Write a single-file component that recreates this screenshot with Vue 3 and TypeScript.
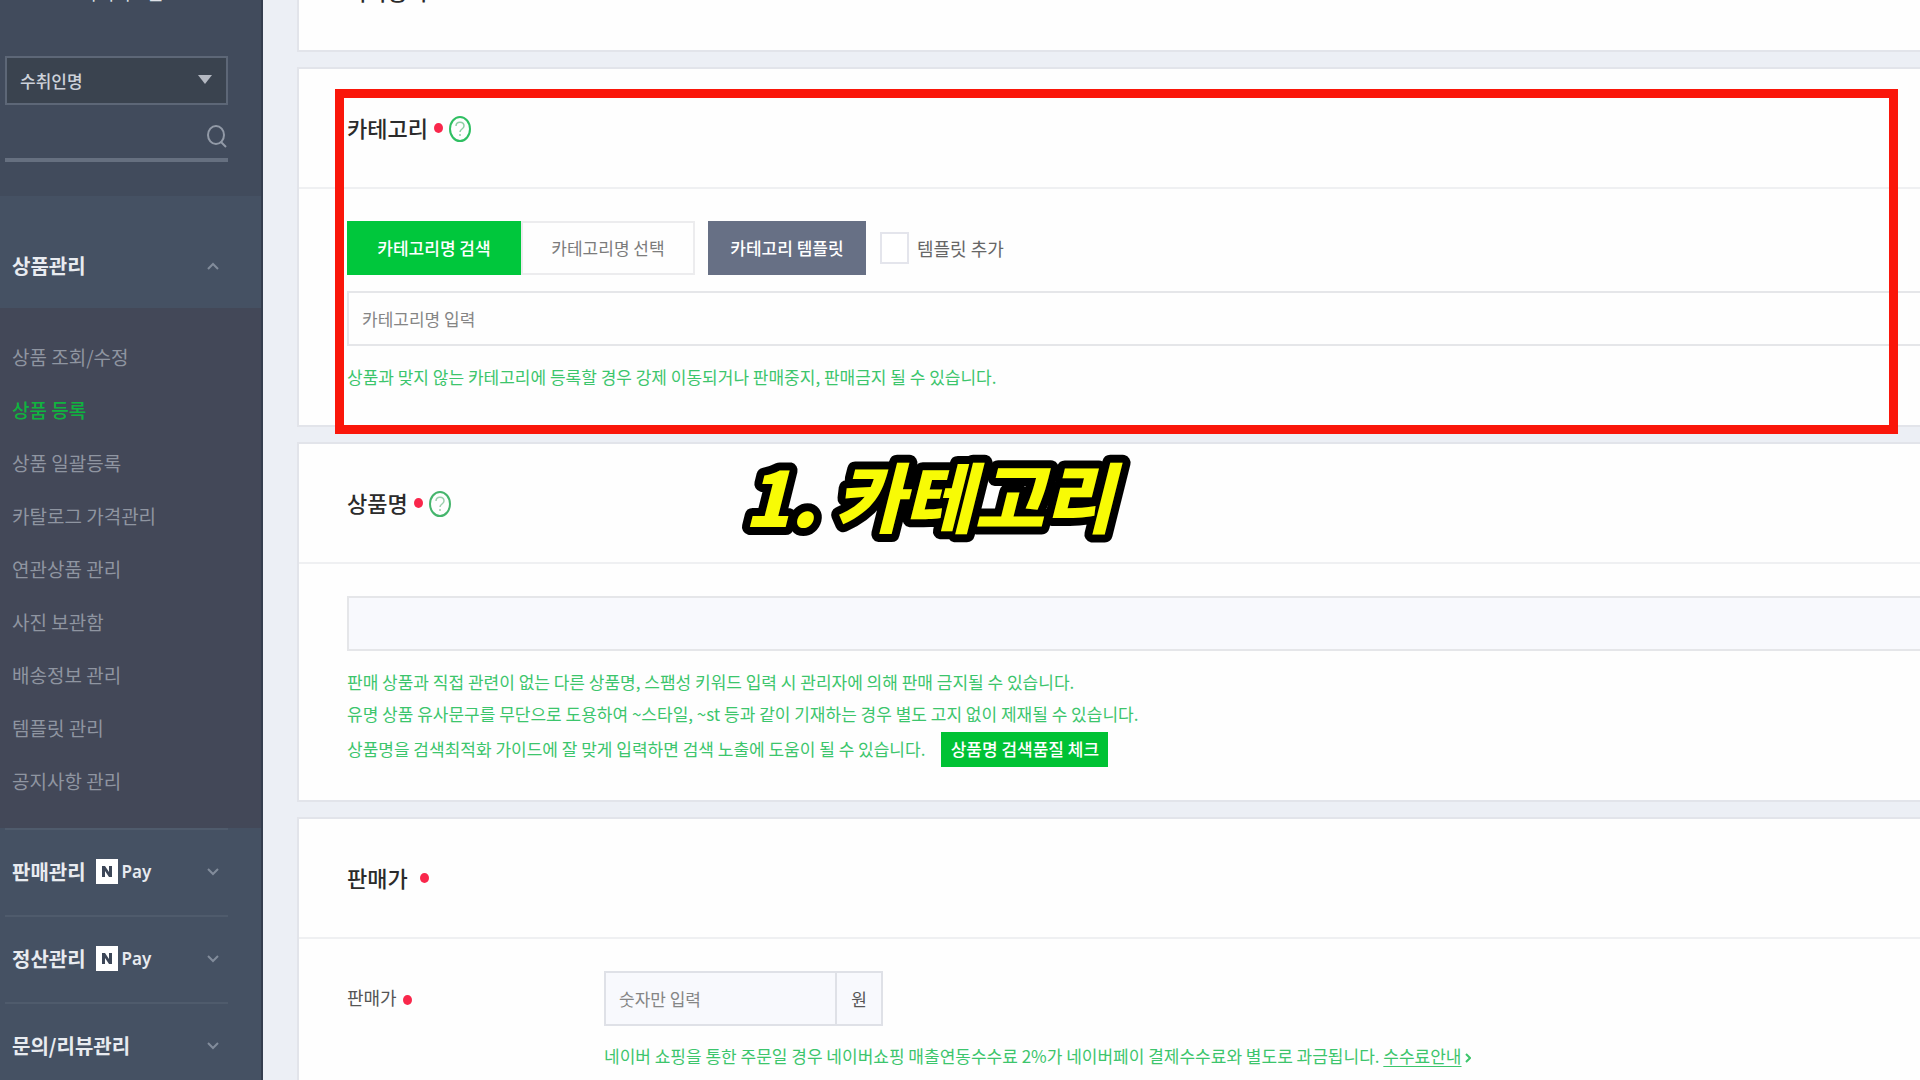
<script setup lang="ts">
import { ref } from 'vue'

interface MenuItem {
  label: string
  active?: boolean
}

interface MenuGroup {
  label: string
  pay: boolean
}

const productMenu: MenuItem[] = [
  { label: '상품 조회/수정' },
  { label: '상품 등록', active: true },
  { label: '상품 일괄등록' },
  { label: '카탈로그 가격관리' },
  { label: '연관상품 관리' },
  { label: '사진 보관함' },
  { label: '배송정보 관리' },
  { label: '템플릿 관리' },
  { label: '공지사항 관리' },
]

const groups: MenuGroup[] = [
  { label: '판매관리', pay: true },
  { label: '정산관리', pay: true },
  { label: '문의/리뷰관리', pay: false },
]

const searchType = ref('수취인명')
const keyword = ref('')
const categoryName = ref('')
const addTemplate = ref(false)
const productName = ref('')
const price = ref('')
</script>

<template>
  <div class="page">
    <aside class="sidebar">
      <div class="side-top">
        <div class="store">아이디스몰</div>
        <div class="select-wrap">
          <select v-model="searchType" class="select" aria-label="검색 조건">
            <option>수취인명</option>
          </select>
          <svg class="caret" width="14" height="9" viewBox="0 0 14 9"><path d="M0 0h14L7 9z" fill="#b4b9c2" /></svg>
        </div>
        <div class="search">
          <input v-model="keyword" class="search-input" type="text" aria-label="검색어" />
          <button class="search-btn" type="button" aria-label="검색">
            <svg width="22" height="24" viewBox="0 0 22 24" fill="none" stroke="#929aa7" stroke-width="2">
              <ellipse cx="10" cy="11" rx="8" ry="9" />
              <path d="M15 18l5 5" />
            </svg>
          </button>
        </div>
      </div>

      <nav>
        <button class="group open" type="button">
          <span>상품관리</span>
          <svg class="chev" width="12" height="8" viewBox="0 0 12 8"><path d="M1 7l5-5 5 5" /></svg>
        </button>
        <ul class="menu">
          <li v-for="item in productMenu" :key="item.label">
            <a href="#" :class="{ active: item.active }">{{ item.label }}</a>
          </li>
        </ul>
        <div class="groups">
          <button v-for="g in groups" :key="g.label" class="group" type="button">
            <span>{{ g.label }}</span>
            <span v-if="g.pay" class="pay">
              <svg width="22" height="25" viewBox="0 0 22 25">
                <rect width="22" height="25" fill="#fff" />
                <path d="M6 18V7h3l4 6V7h3v11h-3l-4-6v6z" fill="#3c4657" />
              </svg>
              <span>Pay</span>
            </span>
            <svg class="chev" width="12" height="8" viewBox="0 0 12 8"><path d="M1 1l5 5 5-5" /></svg>
          </button>
        </div>
      </nav>
    </aside>

    <main class="main">
      <section class="card">
        <header class="head"><h2>복사등록</h2></header>
      </section>

      <section class="card">
        <header class="head divided">
          <h2>카테고리</h2>
          <i class="dot"></i>
          <button class="help" type="button" aria-label="카테고리 도움말">
            <svg width="22" height="26" viewBox="0 0 22 26" fill="none">
              <ellipse cx="11" cy="13" rx="10" ry="12" stroke="#2fbf62" stroke-width="2" />
              <path d="M7 10c0-5 8-5 8 0 0 3-4 3-4 6M11 18v2" stroke="#8fcfa5" stroke-width="1.5" />
            </svg>
          </button>
        </header>
        <div class="body">
          <div class="row">
            <button class="btn green" type="button">카테고리명 검색</button>
            <button class="btn white" type="button">카테고리명 선택</button>
            <button class="btn slate" type="button">카테고리 템플릿</button>
            <label class="check"><input v-model="addTemplate" type="checkbox" />템플릿 추가</label>
          </div>
          <input v-model="categoryName" class="field plain" type="text" placeholder="카테고리명 입력" aria-label="카테고리명" />
          <p class="notes">상품과 맞지 않는 카테고리에 등록할 경우 강제 이동되거나 판매중지, 판매금지 될 수 있습니다.</p>
        </div>
        <div class="highlight"></div>
      </section>

      <section class="card">
        <header class="head divided">
          <h2>상품명</h2>
          <i class="dot"></i>
          <button class="help" type="button" aria-label="상품명 도움말">
            <svg width="22" height="26" viewBox="0 0 22 26" fill="none">
              <ellipse cx="11" cy="13" rx="10" ry="12" stroke="#45b56c" stroke-width="2" />
              <path d="M7 10c0-5 8-5 8 0 0 3-4 3-4 6M11 18v2" stroke="#9dcfae" stroke-width="1.5" />
            </svg>
          </button>
        </header>
        <div class="body">
          <input v-model="productName" class="field tinted" type="text" aria-label="상품명" />
          <div class="notes">
            <p>판매 상품과 직접 관련이 없는 다른 상품명, 스팸성 키워드 입력 시 관리자에 의해 판매 금지될 수 있습니다.</p>
            <p>유명 상품 유사문구를 무단으로 도용하여 ~스타일, ~st 등과 같이 기재하는 경우 별도 고지 없이 제재될 수 있습니다.</p>
            <p class="with-btn">
              상품명을 검색최적화 가이드에 잘 맞게 입력하면 검색 노출에 도움이 될 수 있습니다.
              <button class="mini" type="button">상품명 검색품질 체크</button>
            </p>
          </div>
        </div>
        <svg class="caption" width="400" height="110" viewBox="0 0 400 110">
          <text x="4" y="83">1. 카테고리</text>
        </svg>
      </section>

      <section class="card last">
        <header class="head divided">
          <h2>판매가</h2>
          <i class="dot wide"></i>
        </header>
        <div class="body form-row">
          <label class="form-label" for="price">판매가<i class="dot"></i></label>
          <div class="form-value">
            <div class="price">
              <input id="price" v-model="price" type="text" placeholder="숫자만 입력" />
              <span>원</span>
            </div>
            <div class="notes">
              <p>
                네이버 쇼핑을 통한 주문일 경우 네이버쇼핑 매출연동수수료 2%가 네이버페이 결제수수료와 별도로 과금됩니다.
                <a href="#">수수료안내</a>
                <svg class="more" width="6" height="10" viewBox="0 0 6 10" fill="none"><path d="M1 1l4 4-4 4" stroke="#3cc56c" stroke-width="2" /></svg>
              </p>
              <p>판매가, 할인가를 활용한 비정상 거래는 자동 탐지되어 판매지수에 포함되지 않으니 유의해주세요.</p>
            </div>
          </div>
        </div>
      </section>
    </main>
  </div>
</template>

<style>
body {
  margin: 0;
  overflow: hidden;
}
</style>

<style scoped>
.page {
  display: flex;
  height: 100vh;
  overflow: hidden;
  background: #eceff5;
  color: #333;
  font-family: "Noto Sans CJK KR", "Noto Sans", sans-serif;
  font-size: 17px;
  line-height: 32px;
}
* {
  box-sizing: border-box;
}
button,
input,
select {
  margin: 0;
  padding: 0;
  border: 0;
  border-radius: 0;
  background: none;
  font: inherit;
  color: inherit;
  outline: none;
}
h2,
p,
ul {
  margin: 0;
  padding: 0;
}
ul {
  list-style: none;
}

.sidebar {
  flex: none;
  width: 263px;
  background: #455163;
  border-right: 2px solid #343d4e;
}
.side-top {
  height: 220px;
  margin-top: -24px;
  padding: 0 33px 0 5px;
  background: #414b5c;
}
.store {
  height: 80px;
  padding-left: 12px;
  font-size: 18px;
  text-align: center;
  color: #dfe2e8;
}
.select-wrap {
  position: relative;
  height: 49px;
}
.select {
  width: 100%;
  height: 49px;
  padding-left: 13px;
  border: 2px solid #5d6777;
  background: #3a434f;
  color: #cdd2da;
  font-weight: 500;
  appearance: none;
}
.caret {
  position: absolute;
  right: 16px;
  top: 19px;
}
.search {
  display: flex;
  align-items: center;
  height: 57px;
  border-bottom: 4px solid #667080;
}
.search-input {
  flex: 1;
  min-width: 0;
  height: 40px;
}
.search-btn {
  display: flex;
  padding-top: 8px;
}
.group {
  display: flex;
  align-items: center;
  width: 100%;
  height: 87px;
  padding: 0 9px 2px 7px;
  border-top: 2px solid #4f5b6c;
  font-size: 20px;
  font-weight: 700;
  color: #e8ebf0;
  text-align: left;
}
.group.open {
  height: 112px;
  padding: 28px 42px 0 12px;
  border-top: 0;
}
.groups {
  padding: 0 33px 0 5px;
}
.chev {
  margin-left: auto;
  fill: none;
  stroke: #828c9b;
  stroke-width: 2;
}
.pay {
  display: flex;
  align-items: center;
  gap: 4px;
  margin-left: 10px;
  font-family: "Noto Sans", sans-serif;
  font-size: 17px;
  font-weight: 600;
}
.menu {
  padding: 22px 12px 21px;
  background: #434858;
}
.menu a {
  display: block;
  font-size: 19px;
  line-height: 53px;
  color: #8f95a1;
  text-decoration: none;
}
.menu a.active {
  color: #0fb43f;
  font-weight: 500;
}

.main {
  flex: 1;
  min-width: 0;
  display: flex;
  flex-direction: column;
  gap: 15px;
  margin-top: -70px;
  padding-left: 34px;
}
.card {
  position: relative;
  flex: none;
  background: #fefefe;
  border: 2px solid #e2e4ea;
  border-right: 0;
}
.head {
  display: flex;
  align-items: center;
  height: 118px;
  padding-left: 48px;
}
.head.divided {
  height: 120px;
  border-bottom: 2px solid #eff0f2;
}
h2 {
  padding-bottom: 2px;
  font-size: 22px;
  font-weight: 500;
  color: #2b2b2b;
}
.dot {
  display: inline-block;
  width: 9px;
  height: 10px;
  margin-left: 6px;
  border-radius: 50%;
  background: #f9274b;
}
.dot.wide {
  margin-left: 12px;
}
.help {
  display: flex;
  margin-left: 6px;
  padding-top: 2px;
}
.body {
  padding: 32px 0 32px 48px;
}
.row {
  display: flex;
  align-items: center;
  height: 54px;
  margin-bottom: 16px;
}
.btn {
  height: 54px;
  width: 174px;
}
.btn.green {
  background: #00c73c;
  color: #fff;
  font-weight: 500;
}
.btn.white {
  border: 2px solid #ececee;
  color: #7b7b7b;
}
.btn.slate {
  width: 158px;
  margin-left: 13px;
  background: #677085;
  color: #fff;
  font-weight: 500;
}
.check {
  display: flex;
  align-items: center;
  margin-left: 14px;
  font-size: 18px;
  color: #666;
}
.check input {
  width: 29px;
  height: 32px;
  margin-right: 8px;
  border: 2px solid #e4e5ec;
  background: #fff;
  appearance: none;
}
.field {
  display: block;
  width: 100%;
  height: 55px;
  padding-left: 13px;
  border: 2px solid #e5e6e9;
  border-right: 0;
}
.field.tinted {
  background: #f8f9fd;
}
input::placeholder {
  color: #858585;
  opacity: 1;
}
.notes {
  margin-top: 15px;
  color: #3cc56c;
  white-space: nowrap;
}
.notes a {
  color: inherit;
  text-underline-offset: 3px;
}
.more {
  margin-left: 3px;
}
.with-btn {
  display: flex;
  align-items: center;
  gap: 16px;
  height: 38px;
}
.mini {
  width: 167px;
  height: 35px;
  background: #00c234;
  color: #fff;
  font-weight: 500;
}
.form-row {
  display: flex;
}
.form-label {
  width: 257px;
  font-size: 18px;
  line-height: 53px;
  color: #555;
}
.form-value .notes {
  margin-top: 14px;
}
.price {
  display: flex;
  width: 279px;
  height: 55px;
  border: 2px solid #dfe1e7;
  background: #f8f9fd;
}
.price input {
  flex: 1;
  min-width: 0;
  padding-left: 13px;
}
.price span {
  width: 46px;
  border-left: 2px solid #dfe1e7;
  text-align: center;
  line-height: 51px;
  color: #555;
}

.highlight {
  position: absolute;
  left: 36px;
  right: 22px;
  top: 20px;
  height: 345px;
  border: 9px solid #fa160a;
  z-index: 2;
  pointer-events: none;
}
.caption {
  position: absolute;
  left: 441px;
  top: 0;
  overflow: visible;
}
.caption text {
  font-size: 76px;
  font-weight: 900;
  font-style: italic;
  fill: #f8fb05;
  stroke: #000;
  stroke-width: 16px;
  stroke-linejoin: round;
  paint-order: stroke;
}
</style>
